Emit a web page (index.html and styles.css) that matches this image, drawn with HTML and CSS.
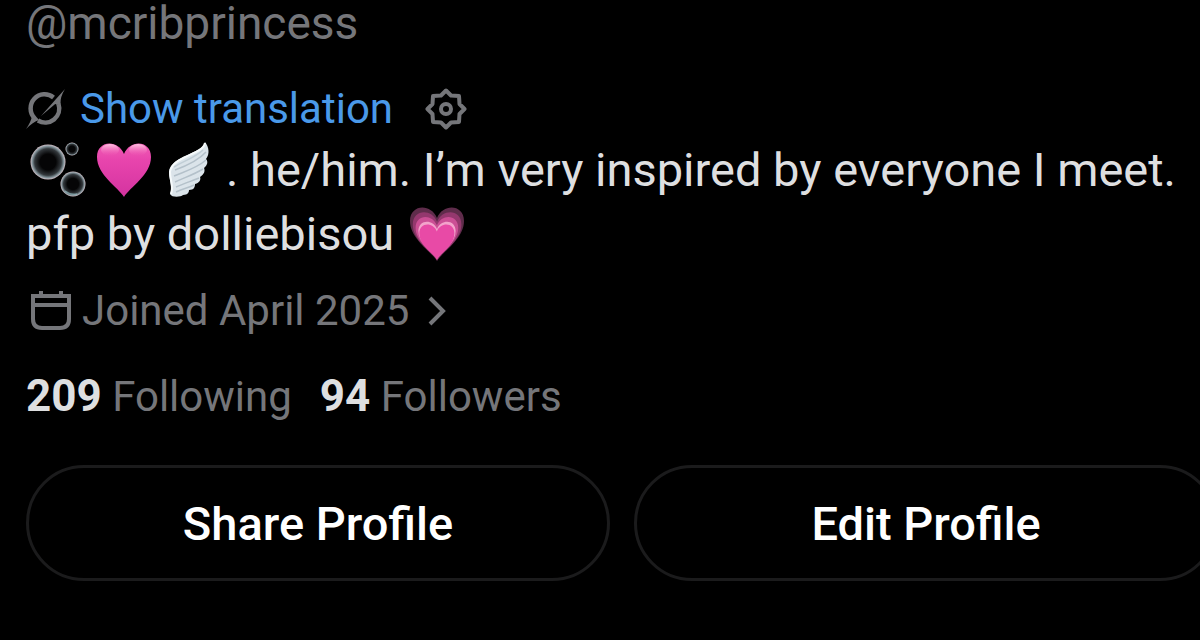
FILE: index.html
```html
<!DOCTYPE html>
<html lang="en">
<head>
  <meta charset="UTF-8">
  <meta name="viewport" content="width=device-width, initial-scale=1.0">
  <title>@mcribprincess</title>
  <link rel="stylesheet" href="styles.css">
</head>
<body>
  <main class="profile">
    <p class="handle">@mcribprincess</p>

    <div class="translate">
      <svg class="icon-grok" viewBox="0 0 40 42" aria-hidden="true">
        <path d="M8.500 30 A14 14 0 0 1 27.500 9.500" fill="none" stroke="currentColor" stroke-width="4.500"/>
        <path d="M32.500 16 A14 14 0 0 1 12 32.500" fill="none" stroke="currentColor" stroke-width="4.500"/>
        <path d="M39 1 Q34 9 34.500 16 L30.500 17 Q30 15 28 17 L15 28 L30 11Z M0 41 Q5 34 6 28 L10 28.500 L13 32 Q7 34 0 41Z" fill="currentColor"/>
      </svg>
      <button class="link" type="button">Show translation</button>
      <button class="settings" type="button" aria-label="Translation settings">
        <svg class="icon-gear" viewBox="0 0 42 42" aria-hidden="true">
          <path d="M21 2.500 L26 7.500 L34 8 L34.500 16 L39.500 21 L34.500 26 L34 34 L26 34.500 L21 39.500 L16 34.500 L8 34 L7.500 26 L2.500 21 L7.500 16 L8 8 L16 7.500Z"/>
          <circle cx="21" cy="21" r="5"/>
        </svg>
      </button>
    </div>

    <p class="bio">
      <svg class="emoji" viewBox="0 0 58 58" role="img" aria-label="Bubbles">
        <defs>
          <radialGradient id="bubble">
            <stop offset="0.45" stop-color="#050506"/>
            <stop offset="0.76" stop-color="#33383c"/>
            <stop offset="0.9" stop-color="#84959c"/>
            <stop offset="1" stop-color="#d0bfc6"/>
          </radialGradient>
        </defs>
        <circle cx="20" cy="21" r="17.500" fill="url(#bubble)"/>
        <circle cx="44" cy="8" r="6.500" fill="url(#bubble)"/>
        <circle cx="45" cy="43" r="12.500" fill="url(#bubble)"/>
        <path d="M37 50 Q42 54 49 53" fill="none" stroke="#9fd0d6" stroke-width="1.500" opacity="0.5"/>
      </svg>
      <svg class="emoji" viewBox="0 0 58 58" role="img" aria-label="Pink heart">
        <defs>
          <linearGradient id="pink" x1="0" y1="0" x2="0" y2="1">
            <stop offset="0" stop-color="#f05cb4"/>
            <stop offset="0.3" stop-color="#e845ad"/>
            <stop offset="1" stop-color="#d433a0"/>
          </linearGradient>
          <linearGradient id="shine" x1="0" y1="0" x2="0" y2="1">
            <stop offset="0" stop-color="#ffc4e2"/>
            <stop offset="1" stop-color="#f05cb4" stop-opacity="0"/>
          </linearGradient>
        </defs>
        <path d="M29 56 C23 46 2 34 2 16 C2 -1 23 -2 29 13 C35 -2 56 -1 56 16 C56 34 35 46 29 56Z" fill="url(#pink)"/>
        <ellipse cx="15" cy="9" rx="9" ry="6" fill="url(#shine)"/>
        <ellipse cx="43" cy="9" rx="9" ry="6" fill="url(#shine)"/>
      </svg>
      <svg class="emoji" viewBox="-3 0 58 58" role="img" aria-label="Wing">
        <path d="M41 1 C39 13 7 14 5 31 C5 39 9 46 6 53 C8 57 17 56 19 54 C24 54 25 51 25 49 C30 49 31 46 31 43 C36 42 37 38 36 36 C41 33 41 29 40 27 C44 24 44 20 42 18 C46 13 45 6 41 1Z" fill="#dbe4ea"/>
        <path d="M41 2 C39 14 8 15 6 31 C6 39 10 46 7 53" fill="none" stroke="#f6fafb" stroke-width="2"/>
        <path d="M11 29 C22 25 34 20 42 11 M10 35 C22 30 33 27 42 19 M11 41 C22 36 31 33 39 28 M12 46 C21 42 28 40 35 37 M12 51 C20 47 24 47 30 44" fill="none" stroke="#b4c1ca" stroke-width="1.500"/>
        <path d="M10 26 C20 20 32 16 39 9" fill="none" stroke="#c1ced6" stroke-width="1.500"/>
      </svg>
      . he/him. I’m very inspired by everyone I meet.
      <br>
      pfp by dolliebisou
      <svg class="emoji" viewBox="0 0 58 58" role="img" aria-label="Growing heart">
        <defs>
          <path id="heart" d="M29 56 C23 46 2 34 2 16 C2 -1 23 -2 29 13 C35 -2 56 -1 56 16 C56 34 35 46 29 56Z"/>
        </defs>
        <use href="#heart" fill="#5f2c4b"/>
        <use href="#heart" fill="#94386e" transform="translate(3 5) scale(0.9)"/>
        <use href="#heart" fill="#cb4f95" transform="translate(6 10) scale(0.79)"/>
        <use href="#heart" fill="#f3a3cb" transform="translate(9 15) scale(0.69)"/>
        <use href="#heart" fill="#e84aa6" transform="translate(10 18) scale(0.65)"/>
      </svg>
    </p>

    <a class="joined" href="#about">
      <svg class="icon-calendar" viewBox="0 0 42 42" aria-hidden="true">
        <path d="M3 6 H39 V29 Q39 38 30 38 H12 Q3 38 3 29Z M3 15 H39 M11 1 V6 M31 1 V6"/>
      </svg>
      <span>Joined April 2025</span>
      <svg class="icon-chevron" viewBox="0 0 20 32" aria-hidden="true">
        <path d="M3 3 L16 16 L3 29"/>
      </svg>
    </a>

    <div class="counts">
      <a href="#following"><strong>209</strong> Following</a>
      <a href="#followers"><strong>94</strong> Followers</a>
    </div>

    <div class="actions">
      <button type="button">Share Profile</button>
      <button type="button">Edit Profile</button>
    </div>
  </main>
</body>
</html>
```
FILE: styles.css
```css
* {
  box-sizing: border-box;
}

body {
  margin: 0;
  background-color: #000;
  color: #dedfe0;
  font-family: Roboto, "Liberation Sans", sans-serif;
  font-size: 42px;
  line-height: 48px;
  overflow-x: hidden;
}

p {
  margin: 0;
}

a {
  color: inherit;
  text-decoration: none;
}

button {
  padding: 0;
  border: 0;
  background: none;
  color: inherit;
  font: inherit;
  cursor: pointer;
}

svg {
  flex: none;
}

.profile {
  padding: 0 16px 0 26px;
}

.handle,
.translate,
.joined,
.counts {
  color: #75767a;
}

.handle {
  font-size: 46px;
  line-height: 46px;
}

.translate {
  display: flex;
  align-items: center;
  margin-top: 39px;
}

.icon-grok {
  width: 40px;
  height: 42px;
}

.link {
  margin-left: 14px;
  color: #4a99e9;
}

.settings {
  display: flex;
  margin-left: 32px;
}

.icon-gear,
.icon-calendar {
  width: 42px;
  height: 42px;
}

.icon-gear,
.icon-calendar,
.icon-chevron {
  fill: none;
  stroke: currentColor;
  stroke-width: 4;
}

.icon-gear {
  stroke-linejoin: round;
}

.bio {
  margin-top: 5px;
  font-size: 47px;
  line-height: 64px;
}

.emoji {
  width: 58px;
  height: 58px;
  margin: 0 -5px 0 2px;
  vertical-align: -13px;
}

.joined {
  display: flex;
  align-items: center;
  margin-top: 21px;
  padding-left: 4px;
}

.joined span {
  margin: 0 18px 0 10px;
}

.icon-chevron {
  width: 20px;
  height: 32px;
}

.counts {
  display: flex;
  gap: 28px;
  margin-top: 37px;
}

.counts strong {
  color: #dedfe0;
  font-size: 44px;
}

/* the row runs past the right edge of the screen */
.actions {
  display: grid;
  grid-template-columns: 1fr 1fr;
  gap: 24px;
  margin: 44px -34px 0 0;
}

.actions button {
  padding: 32px 0 30px;
  border: 3px solid #1b1b1c;
  border-radius: 58px;
  color: #fff;
  font-size: 47px;
  font-weight: 500;
}
```
